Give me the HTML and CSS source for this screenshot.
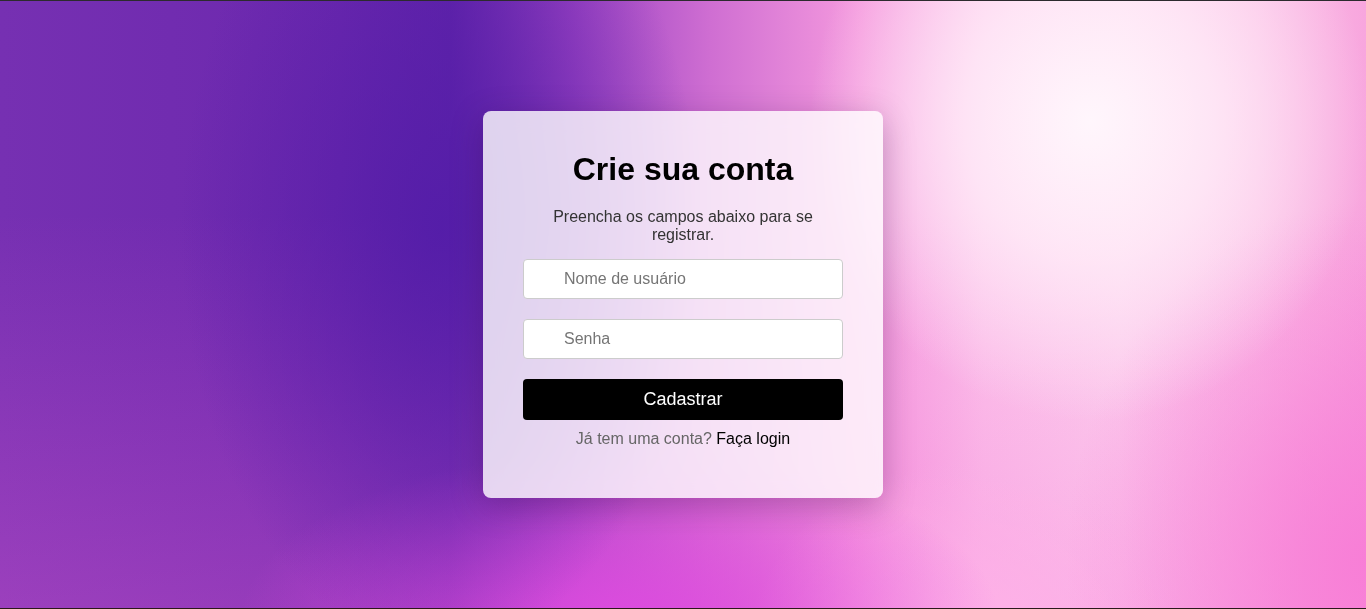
FILE: index.html
```html
<!DOCTYPE html>
<html lang="pt-BR">
<head>
<meta charset="UTF-8">
<title>Crie sua conta</title>
<link rel="stylesheet" href="styles.css">
</head>
<body>
<main class="page">
  <div class="card">
    <h2 class="title">Crie sua conta</h2>
    <p class="subtitle">Preencha os campos abaixo para se registrar.</p>
    <form class="form">
      <div class="field"><input class="input" type="text" placeholder="Nome de usuário"></div>
      <div class="field"><input class="input" type="password" placeholder="Senha"></div>
      <button class="btn" type="button">Cadastrar</button>
    </form>
    <p class="login">Já tem uma conta? <a href="#" class="login-link">Faça login</a></p>
  </div>
</main>
</body>
</html>
```

FILE: styles.css
```css
* { box-sizing: border-box; }
html, body { margin: 0; padding: 0; }
body {
  font-family: "Liberation Sans", Arial, sans-serif;
}
.page {
  height: 100vh;
  border-top: 1px solid #2c2a2e;
  border-bottom: 1px solid #2a1a1a;
  display: flex;
  align-items: center;
  justify-content: center;
  background:
    radial-gradient(ellipse 280px 300px at 1090px 120px, rgba(255,246,252,1) 0%, rgba(255,236,248,0.8) 45%, rgba(255,225,244,0) 100%),
    radial-gradient(ellipse 300px 360px at 1366px 560px, rgba(248,124,214,0.9) 0%, rgba(248,124,214,0) 100%),
    radial-gradient(ellipse 260px 420px at 440px 230px, rgba(82,28,168,0.85) 0%, rgba(82,28,168,0) 100%),
    radial-gradient(ellipse 380px 170px at 620px 620px, rgba(222,74,224,0.95) 0%, rgba(222,74,224,0) 100%),
    radial-gradient(ellipse 220px 180px at 970px 640px, rgba(255,180,232,0.9) 0%, rgba(255,180,232,0) 100%),
    linear-gradient(180deg, rgba(255,255,255,0) 35%, rgba(242,100,214,0.3) 100%),
    linear-gradient(90deg, #7630b2 0%, #6c28ae 25%, #6224aa 33%, #9a42c2 42%, #cf6ed2 52%, #f59ade 63%, #fcc4ea 72%, #fdd4ee 82%, #fbc0e6 92%, #f8a6de 100%);
}
.card {
  width: 400px;
  padding: 40px;
  background: rgba(255,255,255,0.8);
  border-radius: 8px;
  box-shadow: 0 8px 32px rgba(40,0,60,0.28);
  text-align: center;
  backdrop-filter: blur(10px);
}
.title {
  margin: 0 0 20px;
  font-size: 32px;
  line-height: 37px;
  font-weight: bold;
  color: #000;
}
.subtitle {
  margin: 0 auto 15px;
  max-width: 280px;
  font-size: 16px;
  line-height: 18px;
  color: #333;
}
.form {
  display: flex;
  flex-direction: column;
  gap: 20px;
}
.field { display: flex; }
.input {
  width: 100%;
  height: 40px;
  padding: 0 12px 0 40px;
  border: 1px solid #ccc;
  border-radius: 4px;
  background: #fff;
  font-family: "Liberation Sans", Arial, sans-serif;
  font-size: 16px;
  color: #333;
  outline: none;
}
.input::placeholder { color: #757575; }
.btn {
  height: 41px;
  border: none;
  border-radius: 4px;
  background: #000;
  color: #fff;
  font-family: "Liberation Sans", Arial, sans-serif;
  font-size: 18px;
  cursor: pointer;
}
.login {
  margin: 10px 0 10px;
  font-size: 16px;
  line-height: 18px;
  color: #666;
}
.login-link {
  color: #000;
  text-decoration: none;
}
```
